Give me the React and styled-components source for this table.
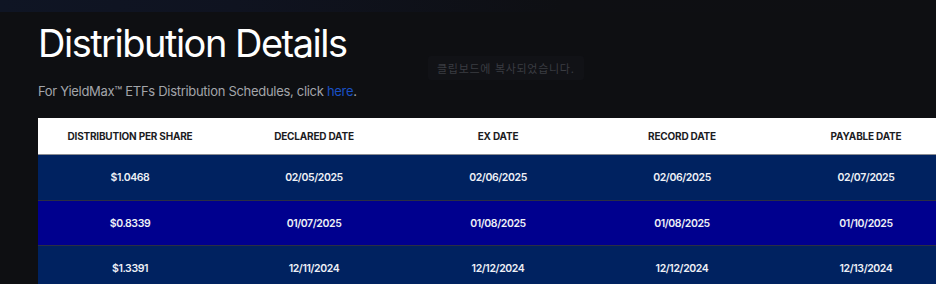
import React from "react";
import styled, { createGlobalStyle } from "styled-components";

const GlobalStyle = createGlobalStyle`
  html, body {
    margin: 0;
    padding: 0;
    background: #0e0f12;
    overflow: hidden;
  }
  body {
    font-family: Inter, "Noto Sans", "Noto Sans CJK KR", sans-serif;
  }
`;

const rows = [
  { amount: "$1.0468", declared: "02/05/2025", ex: "02/06/2025", record: "02/06/2025", payable: "02/07/2025" },
  { amount: "$0.8339", declared: "01/07/2025", ex: "01/08/2025", record: "01/08/2025", payable: "01/10/2025" },
  { amount: "$1.3391", declared: "12/11/2024", ex: "12/12/2024", record: "12/12/2024", payable: "12/13/2024" },
];

const columns = ["Distribution per share", "Declared date", "Ex date", "Record date", "Payable date"];

export default function App() {
  return (
    <>
      <GlobalStyle />
      <Page>
        <TopGlow />
        <Section>
          <Title>Distribution Details</Title>
          <Note>
            For YieldMax™ ETFs Distribution Schedules, click <Link href="#">here</Link>.
          </Note>
          <Table>
            <thead>
              <tr>
                {columns.map((c) => (
                  <Th key={c}>{c}</Th>
                ))}
              </tr>
            </thead>
            <tbody>
              {rows.map((r, i) => (
                <Row key={r.amount} $alt={i % 2 === 1}>
                  <Td>{r.amount}</Td>
                  <Td>{r.declared}</Td>
                  <Td>{r.ex}</Td>
                  <Td>{r.record}</Td>
                  <Td>{r.payable}</Td>
                </Row>
              ))}
            </tbody>
          </Table>
        </Section>
        <Toast>클립보드에 복사되었습니다.</Toast>
      </Page>
    </>
  );
}

const Page = styled.div`
  position: relative;
  width: 936px;
  height: 284px;
  overflow: hidden;
  background: #0e0f12;
`;

const TopGlow = styled.div`
  height: 12px;
  background: linear-gradient(90deg, #0f1524 0%, #0f1320 25%, #0e0f13 60%, #0e0f12 100%);
`;

const Section = styled.div`
  padding: 8px 0 0 38px;
`;

const Title = styled.h1`
  margin: 0;
  font-size: 38px;
  font-weight: 400;
  line-height: 46px;
  color: #ffffff;
  letter-spacing: -1.5px;
`;

const Note = styled.p`
  margin: 16px 0 0;
  font-size: 13px;
  line-height: 18px;
  color: #a3a5aa;
  letter-spacing: -0.3px;
`;

const Link = styled.a`
  color: #1a4fc4;
  text-decoration: none;
`;

const Table = styled.table`
  margin-top: 18px;
  width: 920px;
  border-collapse: collapse;
  table-layout: fixed;
`;

const Th = styled.th`
  height: 36px;
  background: #ffffff;
  color: #1c1c1f;
  font-size: 10px;
  font-weight: 700;
  letter-spacing: -0.2px;
  text-transform: uppercase;
  text-align: center;
  border-bottom: 1px solid #8a8c92;
  padding: 0;
`;

const Row = styled.tr`
  background: ${(p) => (p.$alt ? "#00008e" : "#002260")};
  border-bottom: 1px solid #2a2e44;
`;

const Td = styled.td`
  height: ${(p) => p.$h || 44}px;
  padding: 0;
  text-align: center;
  color: #eef0f6;
  font-size: 10.5px;
  font-weight: 600;
  letter-spacing: -0.4px;

  tr:first-child > & {
    height: 45px;
  }
`;

const Toast = styled.div`
  position: absolute;
  left: 428px;
  top: 56px;
  padding: 4px 9px;
  background: #111216;
  border-radius: 3px;
  color: #3a3c42;
  font-size: 11px;
  letter-spacing: 0.7px;
`;
